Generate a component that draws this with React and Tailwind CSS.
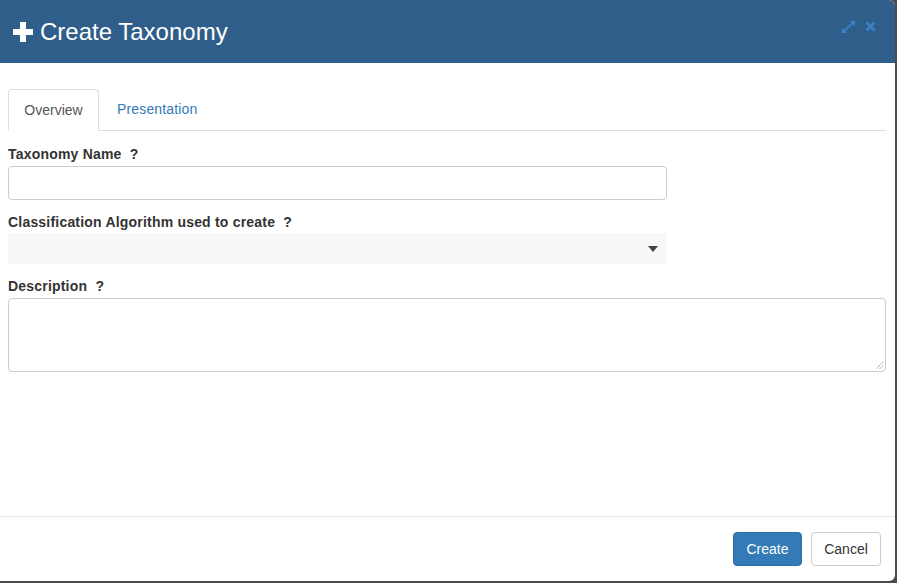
import React from "react";

export default function App() {
  return (
    <div className="w-[897px] h-[583px] bg-[#4b4b4b] overflow-hidden" style={{ fontFamily: '"Liberation Sans", Arial, sans-serif' }}>
      <div className="w-[895px] h-[581px] bg-white rounded-tr-[6px] rounded-br-[6px] flex flex-col overflow-hidden">
        {/* Header */}
        <div className="h-[63px] bg-[#2e5e89] flex items-center pl-[13px] pr-[19px] shrink-0">
          <svg width="20" height="20" viewBox="0 0 20 20" className="mr-[7px] mt-[1px]">
            <path d="M7 0h6v7h7v6h-7v7H7v-7H0V7h7z" fill="#fff" />
          </svg>
          <h1 className="text-white text-[24px] leading-none">Create Taxonomy</h1>
          <div className="ml-auto flex items-center gap-[10px] mb-[10px]">
            <svg width="13" height="12" viewBox="0 0 13 12">
              <path d="M1 11L12 1" stroke="#3b7ec1" strokeWidth="2" />
              <path d="M0 12V6.5L5.5 12z" fill="#3b7ec1" />
              <path d="M13 0v5.5L7.5 0z" fill="#3b7ec1" />
            </svg>
            <svg width="11" height="11" viewBox="0 0 11 11">
              <path d="M1.5 1.5l8 8M9.5 1.5l-8 8" stroke="#3b7ec1" strokeWidth="3" />
            </svg>
          </div>
        </div>

        {/* Body */}
        <div className="flex-1 pt-[26px] pl-[8px] pr-[9px]">
          {/* Tabs */}
          <div className="flex border-b border-[#dddddd] h-[42px] text-[14px]">
            <div className="w-[91px] h-[42px] border border-[#dddddd] border-b-white rounded-t-[4px] bg-white flex items-center justify-center text-[#555] -mb-px">
              Overview
            </div>
            <div className="ml-[18px] flex items-center text-[#337ab7] tracking-[0.15px]">Presentation</div>
          </div>

          <div className="pt-[15px] text-[#333] text-[14px]">
            <label className="block font-bold leading-[17px] tracking-[0.2px]">Taxonomy Name&nbsp;&nbsp;?</label>
            <div className="mt-[3px] w-[659px] h-[34px] border border-[#cccccc] rounded-[4px] bg-white" />

            <label className="block font-bold leading-[17px] mt-[14px] tracking-[0.2px]">Classification Algorithm used to create&nbsp;&nbsp;?</label>
            <div className="mt-[2px] w-[659px] h-[31px] bg-[#f8f8f8] flex items-center justify-end pr-[9px]">
              <svg width="10" height="6" viewBox="0 0 10 6">
                <path d="M0 0h10L5 6z" fill="#444" />
              </svg>
            </div>

            <label className="block font-bold leading-[17px] mt-[14px] tracking-[0.2px]">Description&nbsp;&nbsp;?</label>
            <div className="relative mt-[3px] w-[878px] h-[74px] border border-[#cccccc] rounded-[4px] bg-white">
              <svg width="9" height="9" viewBox="0 0 9 9" className="absolute right-[1px] bottom-[1px]">
                <path d="M8 1L1 8M8 4.5L4.5 8" stroke="#777" strokeWidth="1" strokeDasharray="1 1" />
              </svg>
            </div>
          </div>
        </div>

        {/* Footer */}
        <div className="h-[65px] border-t border-[#e5e5e5] flex items-center justify-end gap-[9px] pr-[14px] shrink-0">
          <button className="w-[69px] h-[34px] bg-[#337ab7] border border-[#2e6da4] rounded-[4px] text-white text-[14px]">Create</button>
          <button className="w-[70px] h-[34px] bg-white border border-[#cccccc] rounded-[4px] text-[#333] text-[14px]">Cancel</button>
        </div>
      </div>
    </div>
  );
}
